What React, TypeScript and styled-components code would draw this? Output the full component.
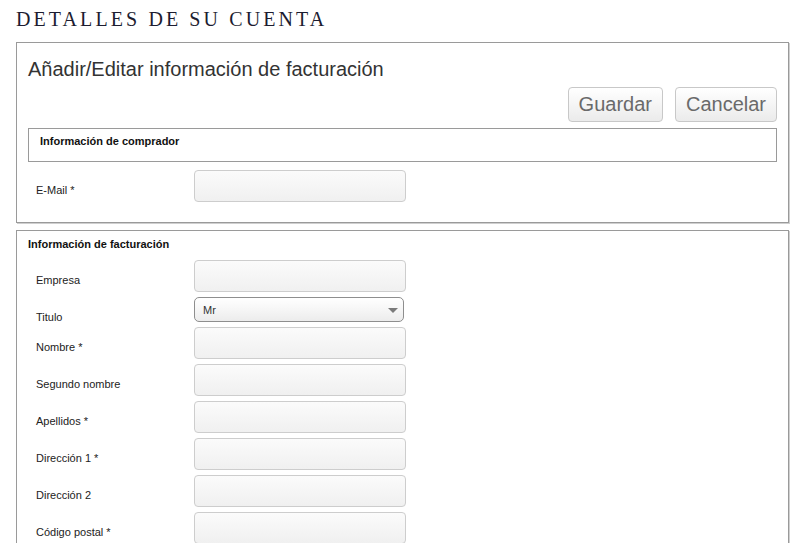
import styled, { createGlobalStyle } from 'styled-components';

const GlobalStyle = createGlobalStyle`
  html, body {
    margin: 0;
    padding: 0;
    overflow: hidden;
    background: #fff;
  }
  body {
    font-family: "Liberation Sans", Arial, sans-serif;
    color: #222;
  }
`;

const Page = styled.div`
  padding: 9px 11px 0 16px;
`;

const PageTitle = styled.h1`
  margin: 0 0 13px;
  font-family: "Liberation Serif", "Times New Roman", serif;
  font-weight: normal;
  font-size: 20px;
  line-height: 20px;
  letter-spacing: 3.1px;
  text-transform: uppercase;
  color: #1c1c30;
`;

const Panel = styled.section<{ $pad: string }>`
  border: 1px solid #9a9a9a;
  box-shadow: 1px 1px 0 #cfcfcf;
  padding: ${(p) => p.$pad};
  margin-bottom: 7px;
`;

const PanelHeading = styled.h2`
  margin: 0 0 6px;
  font-size: 20px;
  line-height: 24px;
  font-weight: normal;
  color: #333;
`;

const Actions = styled.div`
  display: flex;
  justify-content: flex-end;
  gap: 12px;
  margin-bottom: 6px;
`;

const Button = styled.button`
  height: 35px;
  padding: 0 10px;
  font-family: "Liberation Sans", Arial, sans-serif;
  font-size: 20px;
  color: #6a6a6a;
  background: linear-gradient(to bottom, #ffffff, #ebebeb);
  border: 1px solid #c8c8c8;
  border-radius: 4px;
  cursor: pointer;
`;

const Legend = styled.div`
  border: 1px solid #9a9a9a;
  padding: 6px 11px 13px;
  font-size: 11px;
  line-height: 13px;
  font-weight: bold;
  color: #111;
  margin-bottom: 8px;
`;

const SectionTitle = styled.div`
  font-size: 11px;
  line-height: 13px;
  font-weight: bold;
  color: #111;
  margin-bottom: 9px;
`;

const Fields = styled.div`
  display: grid;
  grid-template-columns: 158px 212px;
  row-gap: 5px;
  padding-left: 8px;
`;

const Label = styled.label`
  font-size: 11px;
  line-height: 9px;
  padding-top: 16px;
  color: #222;
`;

const Input = styled.input`
  box-sizing: border-box;
  width: 212px;
  height: 32px;
  border: 1px solid #cdcdcd;
  border-radius: 4px;
  background: linear-gradient(to bottom, #fbfbfb, #f0f0f0);
  font-family: "Liberation Sans", Arial, sans-serif;
  font-size: 11px;
  padding: 0 8px;
  outline: none;
`;

const SelectBox = styled.div`
  position: relative;
  box-sizing: border-box;
  width: 210px;
  height: 25px;
  border: 1px solid #8e8e8e;
  border-radius: 5px;
  background: linear-gradient(to bottom, #ffffff 0%, #f6f6f6 50%, #ececec 100%);
  display: flex;
  align-items: center;
  padding: 0 8px;
  font-size: 11px;
  color: #333;
`;

const Caret = styled.span`
  position: absolute;
  right: 5px;
  top: 10px;
  width: 0;
  height: 0;
  border-left: 5px solid transparent;
  border-right: 5px solid transparent;
  border-top: 5px solid #7a7a7a;
`;

type Field = { label: string; kind?: 'select'; value?: string };

const billing: Field[] = [
  { label: 'Empresa' },
  { label: 'Titulo', kind: 'select', value: 'Mr' },
  { label: 'Nombre *' },
  { label: 'Segundo nombre' },
  { label: 'Apellidos *' },
  { label: 'Dirección 1 *' },
  { label: 'Dirección 2' },
  { label: 'Código postal *' },
];

function FieldRow({ field }: { field: Field }) {
  return (
    <>
      <Label>{field.label}</Label>
      {field.kind === 'select' ? (
        <SelectBox>
          {field.value}
          <Caret />
        </SelectBox>
      ) : (
        <Input type="text" />
      )}
    </>
  );
}

export default function App(): JSX.Element {
  return (
    <Page>
      <GlobalStyle />
      <PageTitle>Detalles de su cuenta</PageTitle>
      <Panel $pad="14px 11px 20px 11px">
        <PanelHeading>Añadir/Editar información de facturación</PanelHeading>
        <Actions>
          <Button>Guardar</Button>
          <Button>Cancelar</Button>
        </Actions>
        <Legend>Información de comprador</Legend>
        <Fields>
          <FieldRow field={{ label: 'E-Mail *' }} />
        </Fields>
      </Panel>
      <Panel $pad="7px 11px 19px 11px">
        <SectionTitle>Información de facturación</SectionTitle>
        <Fields>
          {billing.map((f) => (
            <FieldRow key={f.label} field={f} />
          ))}
        </Fields>
      </Panel>
    </Page>
  );
}
